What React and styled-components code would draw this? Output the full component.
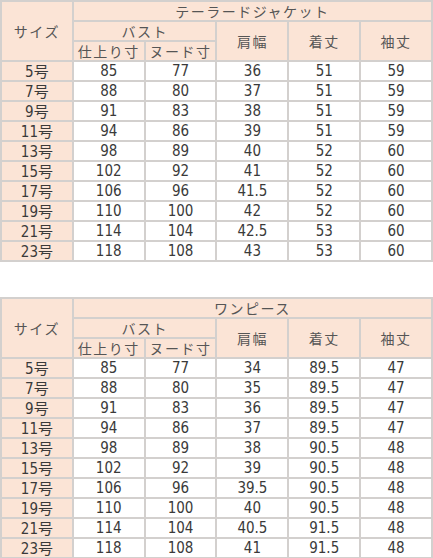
import React from 'react'
import styled, { createGlobalStyle } from 'styled-components'

const Global = createGlobalStyle`
  body {
    margin: 0;
    background: #ffffff;
    font-family: "DejaVu Sans Condensed", "DejaVu Sans", "Noto Sans CJK JP", sans-serif;
    color: #3a3a3a;
  }
`

const Page = styled.div`
  width: 433px;
  display: flex;
  flex-direction: column;
  gap: 35px;
`

const Table = styled.table`
  width: 433px;
  table-layout: fixed;
  border-collapse: collapse;
`

const Row = styled.tr`
  height: 20px;
`

const Cell = styled.td`
  padding: 0;
  border: 2px solid #d3d0ce;
  text-align: center;
  vertical-align: middle;
  line-height: 16px;
  font-size: ${p => (p.$head ? '14px' : '15px')};
  letter-spacing: ${p => (p.$head ? '1.5px' : '0')};
  font-weight: normal;
  background: ${p => (p.$peach ? '#fbe4d6' : '#ffffff')};
  font-family: ${p =>
    p.$head
      ? '"Noto Sans CJK JP", sans-serif'
      : '"DejaVu Sans Condensed", "DejaVu Sans", "Noto Sans CJK JP", sans-serif'};
  color: ${p => (p.$head ? '#555555' : '#3a3a3a')};
`

const Size = styled.span`
  font-family: "Noto Sans CJK JP", sans-serif;
  font-size: 15px;
`

const sizes = ['5', '7', '9', '11', '13', '15', '17', '19', '21', '23']
const bustA = [85, 88, 91, 94, 98, 102, 106, 110, 114, 118]
const bustB = [77, 80, 83, 86, 89, 92, 96, 100, 104, 108]

const jacket = {
  title: 'テーラードジャケット',
  shoulder: ['36', '37', '38', '39', '40', '41', '41.5', '42', '42.5', '43'],
  length: ['51', '51', '51', '51', '52', '52', '52', '52', '53', '53'],
  sleeve: ['59', '59', '59', '59', '60', '60', '60', '60', '60', '60'],
}

const dress = {
  title: 'ワンピース',
  shoulder: ['34', '35', '36', '37', '38', '39', '39.5', '40', '40.5', '41'],
  length: ['89.5', '89.5', '89.5', '89.5', '90.5', '90.5', '90.5', '90.5', '91.5', '91.5'],
  sleeve: ['47', '47', '47', '47', '48', '48', '48', '48', '48', '48'],
}

const SizeTable = ({ data }) => (
  <Table>
    <tbody>
      <Row>
        <Cell $head $peach rowSpan={3}>サイズ</Cell>
        <Cell $head $peach colSpan={5}>{data.title}</Cell>
      </Row>
      <Row>
        <Cell $head $peach colSpan={2}>バスト</Cell>
        <Cell $head $peach rowSpan={2}>肩幅</Cell>
        <Cell $head $peach rowSpan={2}>着丈</Cell>
        <Cell $head $peach rowSpan={2}>袖丈</Cell>
      </Row>
      <Row>
        <Cell $head $peach>仕上り寸</Cell>
        <Cell $head $peach>ヌード寸</Cell>
      </Row>
      {sizes.map((s, i) => (
        <Row key={s}>
          <Cell $peach>{s}<Size>号</Size></Cell>
          <Cell>{bustA[i]}</Cell>
          <Cell>{bustB[i]}</Cell>
          <Cell>{data.shoulder[i]}</Cell>
          <Cell>{data.length[i]}</Cell>
          <Cell>{data.sleeve[i]}</Cell>
        </Row>
      ))}
    </tbody>
  </Table>
)

const App = () => (
  <>
    <Global />
    <Page>
      <SizeTable data={jacket} />
      <SizeTable data={dress} />
    </Page>
  </>
)

export default App
